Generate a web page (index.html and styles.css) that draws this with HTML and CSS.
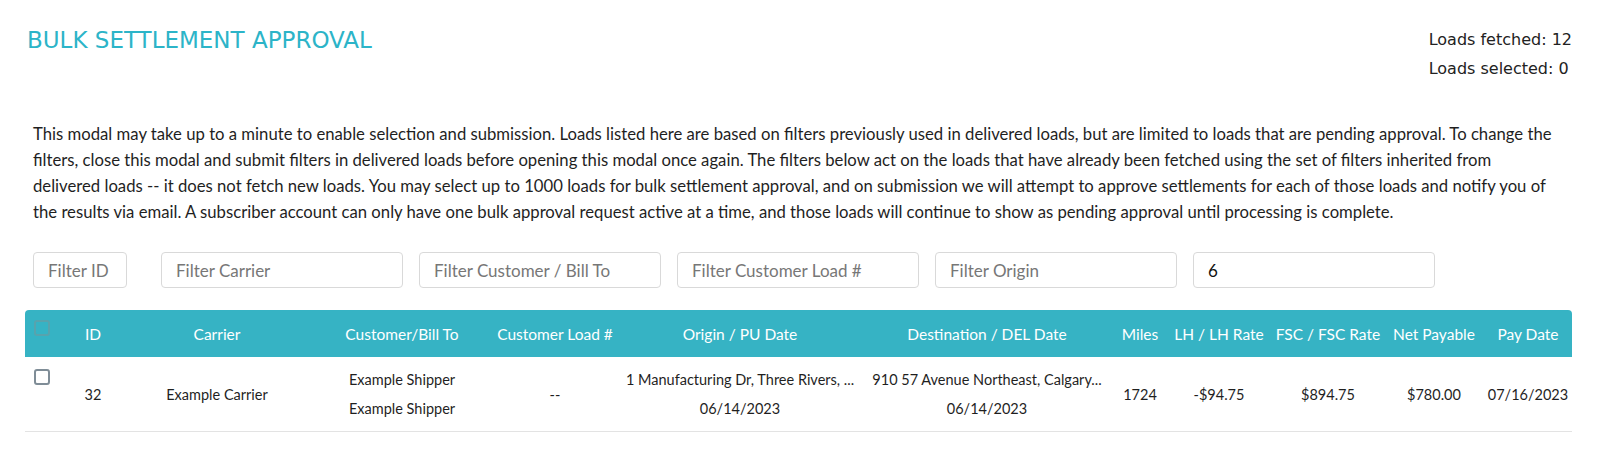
FILE: index.html
```html
<!DOCTYPE html>
<html lang="en">
<head>
    <meta charset="UTF-8">
    <meta name="viewport" content="width=device-width, initial-scale=1.0">
    <title>Bulk Settlement Approval</title>
    <link rel="stylesheet" href="styles.css">
</head>
<body>
    <div id="container">
        <div class="top">
            <h1 class="title">BULK SETTLEMENT APPROVAL</h1>
            <div class="counts">
                <div>Loads fetched: 12</div>
                <div>Loads selected: 0</div>
            </div>
        </div>

        <p class="notice">This modal may take up to a minute to enable selection and submission. Loads listed here are based on filters previously used in delivered loads, but are limited to loads that are pending approval. To change the filters, close this modal and submit filters in delivered loads before opening this modal once again. The filters below act on the loads that have already been fetched using the set of filters inherited from <span class="nowrap">delivered loads -- it does not fetch new loads.</span> You may select up to 1000 loads for bulk settlement approval, and on submission we will attempt to approve settlements for each of those loads and notify you of the results via email. A subscriber account can only have one bulk approval request active at a time, and those loads will continue to show as pending approval until processing is complete.</p>

        <div class="filters">
            <input type="text" class="f-id" placeholder="Filter ID">
            <input type="text" placeholder="Filter Carrier">
            <input type="text" placeholder="Filter Customer / Bill To">
            <input type="text" placeholder="Filter Customer Load #">
            <input type="text" placeholder="Filter Origin">
            <input type="text" value="6">
        </div>

        <table class="loads">
            <colgroup>
                <col style="width:41px">
                <col style="width:54px">
                <col style="width:194px">
                <col style="width:176px">
                <col style="width:130px">
                <col style="width:240px">
                <col style="width:254px">
                <col style="width:52px">
                <col style="width:106px">
                <col style="width:112px">
                <col style="width:100px">
                <col style="width:88px">
            </colgroup>
            <thead>
                <tr>
                    <th class="c-check"><input type="checkbox" disabled></th>
                    <th>ID</th>
                    <th>Carrier</th>
                    <th>Customer/Bill To</th>
                    <th>Customer Load #</th>
                    <th>Origin / PU Date</th>
                    <th>Destination / DEL Date</th>
                    <th>Miles</th>
                    <th>LH / LH Rate</th>
                    <th>FSC / FSC Rate</th>
                    <th>Net Payable</th>
                    <th>Pay Date</th>
                </tr>
            </thead>
            <tbody>
                <tr>
                    <td class="c-check"><input type="checkbox"></td>
                    <td>32</td>
                    <td>Example Carrier</td>
                    <td><div>Example Shipper</div><div>Example Shipper</div></td>
                    <td>--</td>
                    <td><div class="addr">1 Manufacturing Dr, Three Rivers, ...</div><div>06/14/2023</div></td>
                    <td><div class="addr">910 57 Avenue Northeast, Calgary...</div><div>06/14/2023</div></td>
                    <td>1724</td>
                    <td>-$94.75</td>
                    <td>$894.75</td>
                    <td>$780.00</td>
                    <td>07/16/2023</td>
                </tr>
            </tbody>
        </table>
    </div>
</body>
</html>
```

FILE: styles.css
```css
body {
    margin: 0;
    padding: 0;
    background-color: #fff;
    font-family: Lato, "Open Sans", sans-serif;
    color: #1f1f1f;
}

#container {
    padding: 25px 28px 40px 25px;
}

.top {
    display: flex;
    justify-content: space-between;
    align-items: flex-start;
    padding-left: 2px;
}

.title {
    margin: 1px 0 0 0;
    font-family: "DejaVu Sans", sans-serif;
    font-size: 23px;
    font-weight: 400;
    line-height: 29px;
    color: #2cb4c8;
}

.counts {
    font-family: "DejaVu Sans", sans-serif;
    font-size: 16px;
    line-height: 29px;
    color: #222;
}

.notice {
    margin: 38px 0 0 8px;
    font-size: 16.7px;
    line-height: 26px;
}

.nowrap {
    white-space: nowrap;
}

.filters {
    display: flex;
    gap: 16px;
    margin: 27px 0 0 8px;
}

.filters input {
    box-sizing: border-box;
    width: 242px;
    height: 36px;
    padding: 0 14px;
    border: 1px solid #d9d9d9;
    border-radius: 4px;
    font-family: Lato, sans-serif;
    font-size: 17px;
    color: #111;
    outline: none;
}

.filters input::placeholder {
    color: #777;
}

.filters .f-id {
    width: 94px;
    margin-right: 18px;
}

.loads {
    width: 1547px;
    margin-top: 22px;
    border-collapse: collapse;
    table-layout: fixed;
    font-size: 14.5px;
}

.loads th {
    box-sizing: border-box;
    height: 47px;
    padding: 0;
    background-color: #36b3c4;
    color: #fff;
    font-weight: 400;
    font-size: 15.5px;
    text-align: center;
    white-space: nowrap;
}

.loads thead th:first-child { border-top-left-radius: 4px; }
.loads thead th:last-child { border-top-right-radius: 4px; }

.loads td {
    box-sizing: border-box;
    height: 74px;
    padding: 8px 0;
    text-align: center;
    line-height: 29px;
    white-space: nowrap;
    border-bottom: 1px solid #e3e3e3;
    color: #1f1f1f;
}

.loads .c-check {
    vertical-align: top;
    text-align: left;
    padding: 10px 0 0 9px;
}

.loads td.c-check {
    padding-top: 12px;
}

input[type="checkbox"] {
    appearance: none;
    -webkit-appearance: none;
    box-sizing: border-box;
    width: 16px;
    height: 16px;
    margin: 0;
    border: 2px solid #7f8d97;
    border-radius: 3px;
    background: #fff;
    display: block;
}

th input[type="checkbox"] {
    border-color: rgba(140, 140, 140, 0.4);
    background: transparent;
}
```
